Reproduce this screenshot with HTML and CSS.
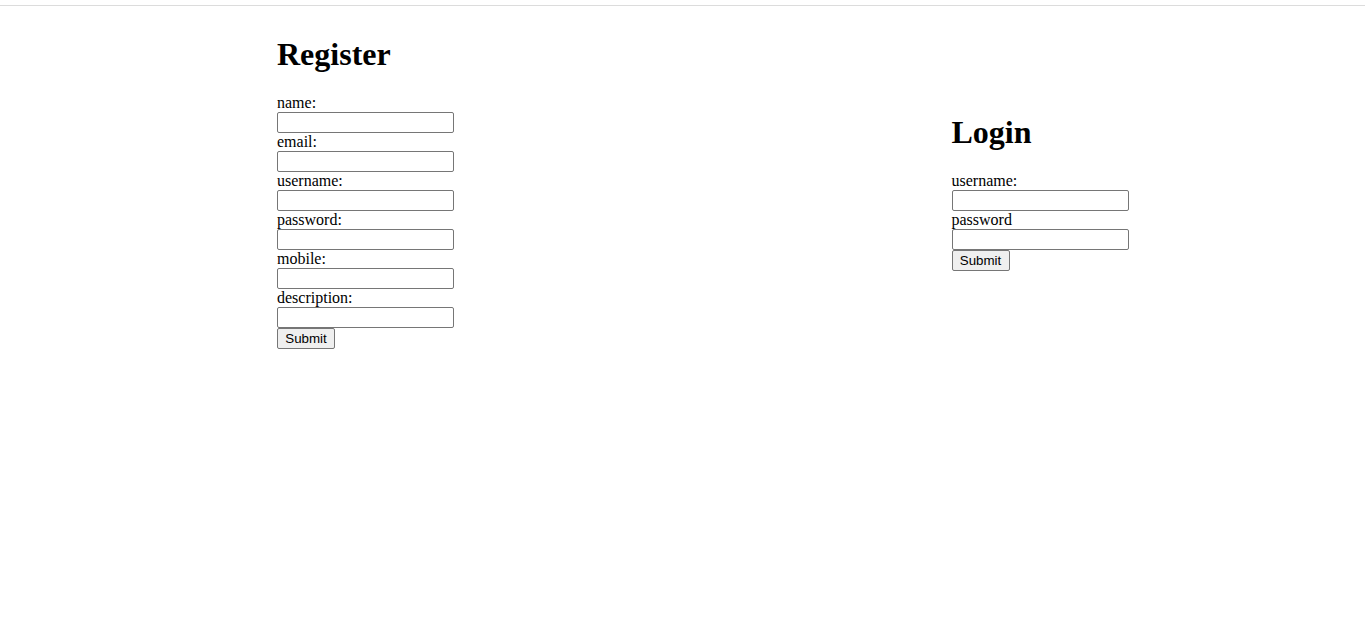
FILE: index.html
```html
<!DOCTYPE html>
<html>
<head>
<meta charset="utf-8">
<title>Register / Login</title>
<link rel="stylesheet" href="styles.css">
</head>
<body>
<div class="topbar"></div>
<div class="container">
  <div class="column">
    <div class="panel">
      <h1 class="title">Register</h1>
      <form class="form">
        <label class="label">name:</label>
        <input class="field" type="text">
        <label class="label">email:</label>
        <input class="field" type="text">
        <label class="label">username:</label>
        <input class="field" type="text">
        <label class="label">password:</label>
        <input class="field" type="password">
        <label class="label">mobile:</label>
        <input class="field" type="text">
        <label class="label">description:</label>
        <input class="field" type="text">
        <button class="submit" type="button">Submit</button>
      </form>
    </div>
  </div>
  <div class="column">
    <div class="panel">
      <h1 class="title">Login</h1>
      <form class="form">
        <label class="label">username:</label>
        <input class="field" type="text">
        <label class="label">password</label>
        <input class="field" type="password">
        <button class="submit" type="button">Submit</button>
      </form>
    </div>
  </div>
</div>
</body>
</html>
```
FILE: styles.css
```css
html, body {
  margin: 0;
  padding: 0;
  background: #ffffff;
}
body {
  font-family: "Liberation Serif", "Times New Roman", serif;
  font-size: 16px;
  color: #000;
}
.topbar {
  height: 5px;
  border-bottom: 1px solid #dcdcdc;
}
.container {
  display: grid;
  grid-template-columns: 1fr 1fr;
  align-items: center;
  padding: 9px 8px 0 8px;
}
.column {
  padding-left: 269px;
}
.panel {
  display: flex;
  flex-direction: column;
  align-items: flex-start;
}
.title {
  font-size: 32px;
  font-weight: bold;
  line-height: 37px;
  margin: 21px 0;
}
.form {
  display: flex;
  flex-direction: column;
  align-items: flex-start;
  margin: 0;
}
.label {
  display: block;
  line-height: 18px;
  height: 18px;
}
.field {
  display: block;
  box-sizing: border-box;
  width: 177px;
  height: 21px;
  margin: 0;
  padding: 1px 2px;
  border: 1px solid #767676;
  border-radius: 2px;
  background: #fff;
  font-family: "Liberation Sans", Arial, sans-serif;
  font-size: 13.33px;
}
.submit {
  display: block;
  box-sizing: border-box;
  min-width: 58px;
  height: 21px;
  margin: 0;
  padding: 1px 7px;
  border: 1px solid #767676;
  border-radius: 2px;
  background: #efefef;
  color: #000;
  font-family: "Liberation Sans", Arial, sans-serif;
  font-size: 13.33px;
  line-height: 17px;
}
```
